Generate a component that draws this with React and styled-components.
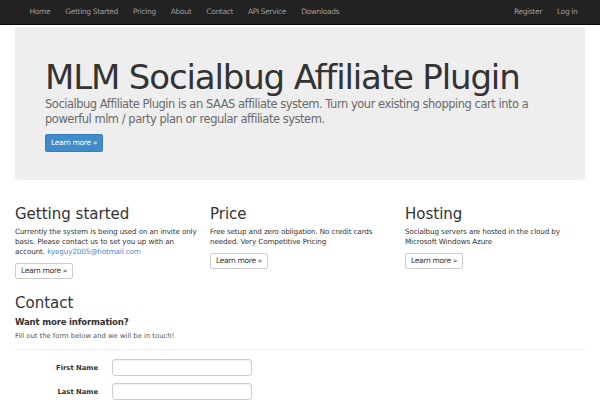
import React from 'react';
import styled, { createGlobalStyle } from 'styled-components';

const GlobalStyle = createGlobalStyle`
  html, body { margin: 0; padding: 0; background: #fff; }
  body {
    font-family: "DejaVu Sans", Verdana, sans-serif;
    color: #333;
    width: 600px;
    height: 400px;
    overflow: hidden;
  }
  * { box-sizing: border-box; }
`;

const Navbar = styled.nav`
  height: 25px;
  background: #222;
  border-bottom: 1px solid #080808;
  display: flex;
  align-items: center;
  justify-content: space-between;
  padding: 0 15px 0 22px;
`;

const NavList = styled.ul`
  display: flex;
  list-style: none;
  margin: 0;
  padding: 0;
`;

const NavLink = styled.a`
  display: block;
  padding: 0 7.5px;
  font-size: 7.5px;
  letter-spacing: -0.35px;
  color: #9d9d9d;
  text-decoration: none;
  line-height: 24px;
`;

const Container = styled.div`
  padding: 0 15px;
`;

const Jumbotron = styled.div`
  margin-top: 2px;
  background: #eee;
  border-radius: 3px;
  padding: 30px 30px 0;
  height: 153px;
  display: flex;
  flex-direction: column;
  align-items: flex-start;
`;

const Title = styled.h1`
  margin: 0;
  font-weight: 400;
  font-size: 34px;
  line-height: 40px;
  letter-spacing: -1.15px;
  color: #333;
`;

const Lead = styled.p`
  margin: 0 0 7px;
  font-size: 11.5px;
  line-height: 15px;
  letter-spacing: -0.48px;
  color: #6a6a6a;
`;

const Button = styled.a`
  display: inline-block;
  font-size: 7.5px;
  line-height: 10px;
  letter-spacing: -0.3px;
  padding: ${(p) => (p.$primary ? '3px 5px' : '2px 5px')};
  border-radius: 2px;
  text-decoration: none;
  border: 1px solid ${(p) => (p.$primary ? '#357ebd' : '#ccc')};
  background: ${(p) => (p.$primary ? '#428bca' : '#fff')};
  color: ${(p) => (p.$primary ? '#fff' : '#333')};
`;

const Columns = styled.div`
  display: grid;
  grid-template-columns: 195px 195px 180px;
  margin-top: 25px;
`;

const Col = styled.div`
  padding-right: 5px;
  display: flex;
  flex-direction: column;
  align-items: flex-start;
`;

const Heading = styled.h2`
  margin: 0 0 4px;
  font-weight: 400;
  font-size: 15px;
  line-height: 18px;
  color: #333;
`;

const Text = styled.p`
  margin: 0 0 6px;
  font-size: 7.2px;
  line-height: 10px;
  letter-spacing: -0.12px;
  color: #333;
`;

const Mail = styled.a`
  color: #428bca;
  text-decoration: none;
`;

const Contact = styled.section`
  margin-top: 15px;
`;

const SubHeading = styled.h4`
  margin: 0 0 3px;
  font-size: 8.6px;
  line-height: 12px;
  letter-spacing: -0.2px;
  font-weight: 700;
  color: #333;
`;

const Small = styled.p`
  margin: 0;
  font-size: 6.8px;
  line-height: 10px;
  color: #555;
`;

const Rule = styled.hr`
  border: 0;
  border-top: 1px solid #eee;
  margin: 8px 0 9px;
`;

const FormRow = styled.div`
  display: grid;
  grid-template-columns: 83px 140px;
  column-gap: 14px;
  align-items: center;
  margin-bottom: 7px;
`;

const Label = styled.label`
  text-align: right;
  font-size: 6.8px;
  font-weight: 700;
  color: #333;
`;

const Input = styled.input`
  height: 17px;
  margin: 0;
  border: 1px solid #ccc;
  border-radius: 3px;
  box-shadow: inset 0 1px 1px rgba(0, 0, 0, 0.075);
  background: #fff;
  width: 140px;
`;

const navLeft = ['Home', 'Getting Started', 'Pricing', 'About', 'Contact', 'API Service', 'Downloads'];
const navRight = ['Register', 'Log in'];

export default function App() {
  return (
    <>
      <GlobalStyle />
      <Navbar>
        <NavList>
          {navLeft.map((n) => (
            <li key={n}><NavLink href="#">{n}</NavLink></li>
          ))}
        </NavList>
        <NavList>
          {navRight.map((n) => (
            <li key={n}><NavLink href="#">{n}</NavLink></li>
          ))}
        </NavList>
      </Navbar>
      <Container>
        <Jumbotron>
          <Title>MLM Socialbug Affiliate Plugin</Title>
          <Lead>
            Socialbug Affiliate Plugin is an SAAS affiliate system. Turn your existing shopping cart into a
            powerful mlm / party plan or regular affiliate system.
          </Lead>
          <Button $primary href="#">Learn more »</Button>
        </Jumbotron>

        <Columns>
          <Col>
            <Heading>Getting started</Heading>
            <Text>
              Currently the system is being used on an invite only basis. Please contact us to set you up with an
              account. <Mail href="#">kyeguy2005@hotmail.com</Mail>
            </Text>
            <Button href="#">Learn more »</Button>
          </Col>
          <Col>
            <Heading>Price</Heading>
            <Text>Free setup and zero obligation. No credit cards needed. Very Competitive Pricing</Text>
            <Button href="#">Learn more »</Button>
          </Col>
          <Col>
            <Heading>Hosting</Heading>
            <Text>Socialbug servers are hosted in the cloud by Microsoft Windows Azure</Text>
            <Button href="#">Learn more »</Button>
          </Col>
        </Columns>

        <Contact>
          <Heading>Contact</Heading>
          <SubHeading>Want more information?</SubHeading>
          <Small>Fill out the form below and we will be in touch!</Small>
          <Rule />
          <FormRow>
            <Label>First Name</Label>
            <Input />
          </FormRow>
          <FormRow>
            <Label>Last Name</Label>
            <Input />
          </FormRow>
        </Contact>
      </Container>
    </>
  );
}
